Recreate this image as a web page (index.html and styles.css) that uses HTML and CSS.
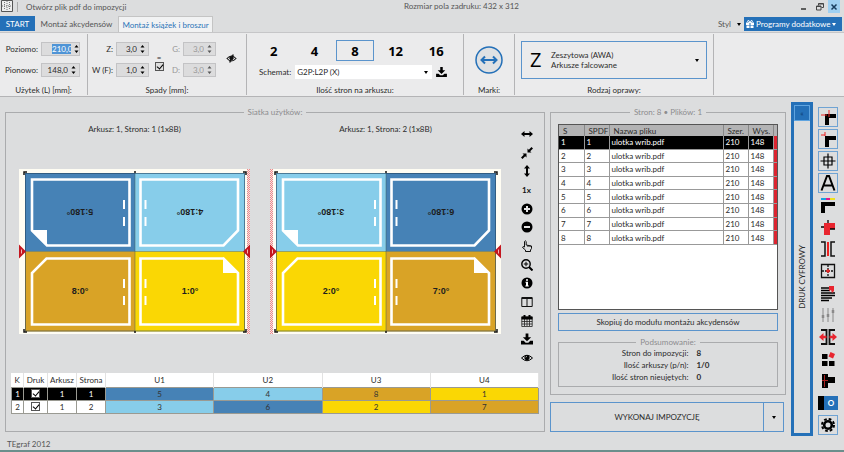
FILE: index.html
```html
<!DOCTYPE html>
<html lang="pl">
<head>
<meta charset="utf-8">
<title>Montaż książek i broszur</title>
<link rel="stylesheet" href="styles.css">
</head>
<body>
<svg class="defs" aria-hidden="true">
  <defs>
    <pattern id="hatch" width="2" height="2" patternUnits="userSpaceOnUse"><rect width="2" height="2" fill="#f4e4e4"/><rect width="1" height="1" fill="#ee8a8a"/><rect x="1" y="1" width="1" height="1" fill="#ee8a8a"/></pattern>
    <g id="frames">
      <g fill="none" stroke="#fff" stroke-width="2.6">
        <path d="M28 76.5H110.500V10.500H13V61.500Z"/>
        <path d="M121.500 10.500H219V61.500L204.500 76.500H121.500Z"/>
        <path d="M27.500 89.500H110.500V155.500H13V104Z"/>
        <path d="M121.500 89.500H204.500L219 104V155.500H121.500Z"/>
        <path stroke-width="2" d="M105 31v9M105 48v9M126.500 31v9M126.500 48v9M105 110v9M105 127v9M126.500 110v9M126.500 127v9"/>
      </g>
      <path d="M12 61H28V77ZM204 88V104H220Z" fill="#fff"/>
      <path d="M6 82.500H226M116 4V162.500" stroke="#3a5a50" stroke-opacity=".45" fill="none"/>
      <rect x="6.500" y="4.500" width="219" height="157.500" fill="none" stroke="#23455f" stroke-opacity=".6"/>
      <path d="M5 6V3h3M224 3h3v3M5 160v3h3M224 163h3v-3M116 2v2M116 162v2" fill="none" stroke="#151515" stroke-width="1.500"/>
      <path d="M0 75.500L7 82.500L0 89.500ZM231 75.500L224 82.500L231 89.500Z" fill="#c4161f"/>
      <path d="M2.500 80.500v4M228.500 80.500v4" stroke="#f3b5b5"/>
    </g>
    <g id="save"><path d="M5 0h3v4h3L6.500 8.500 2 4h3zM0 8h3l2 2h3l2-2h3v4H0z"/></g>
    <g id="spin"><path d="M0 3l2.500-3L5 3zM0 7l2.500 3L5 7z"/></g>
    <g id="down"><path d="M0 0h4L2 3z"/></g>
  </defs>
</svg>

<header class="titlebar">
  <svg class="app-icon" viewBox="0 0 12 12" width="12" height="12"><path d="M.5.5h11v11H.5z" fill="#eee" stroke="#555"/><path d="M6 1v10M1 6h10M3.500 2v8M8.500 2v8" stroke="#777" stroke-dasharray="1 1"/></svg>
  <span class="title">Otwórz plik pdf do impozycji</span>
  <span class="field-size">Rozmiar pola zadruku: 432 x 312</span>
  <div class="window-buttons">
    <button aria-label="Minimalizuj"><svg viewBox="0 0 8 8" width="8" height="8"><path d="M1 6h5" stroke="#333" stroke-width="1.500"/></svg></button>
    <button aria-label="Przywróć"><svg viewBox="0 0 8 8" width="8" height="8" fill="none" stroke="#444"><path d="M.5 3h4.500v4H.5zM.5 3.500H5M2.500 2.500v-2h5v4H5.500M2.500 1h5"/></svg></button>
    <button class="close" aria-label="Zamknij"><svg viewBox="0 0 8 8" width="8" height="8"><path d="M1.500 1.500l5 5M6.500 1.500l-5 5" stroke="#173c5e" stroke-width="1.500"/></svg></button>
  </div>
</header>

<nav class="tabs">
  <button class="tab start">START</button>
  <button class="tab jobs">Montaż akcydensów</button>
  <button class="tab active">Montaż książek i broszur</button>
  <button class="style-menu">Styl <svg viewBox="0 0 4 3" width="4" height="3"><use href="#down"/></svg></button>
  <button class="extras"><svg viewBox="0 0 8 8" width="8" height="8" fill="#fff"><path d="M0 2.500h3.500V5H0zM4.500 2.500H8V5H4.500zM.5 5.500h3V8h-3zM4.500 5.500h3V8h-3z"/><path d="M4 2.500C1 2.500 1 .500 2.500.500 3.500.500 4 2.500 4 2.500S4.500.500 5.500.500C7 .500 7 2.500 4 2.500z" fill="none" stroke="#fff"/></svg><span>Programy dodatkowe</span><svg viewBox="0 0 4 3" width="4" height="3" fill="#fff"><use href="#down"/></svg></button>
</nav>

<section class="ribbon">
  <div class="group size">
    <div class="group-body fields">
      <label for="w">Poziomo:</label><span class="spin"><input id="w" class="selected" value="210,0"><svg viewBox="0 0 5 10" width="5" height="8"><use href="#spin"/></svg></span>
      <label for="h">Pionowo:</label><span class="spin"><input id="h" value="148,0"><svg viewBox="0 0 5 10" width="5" height="8"><use href="#spin"/></svg></span>
    </div>
    <div class="caption">Użytek (L) [mm]:</div>
  </div>
  <div class="group bleeds">
    <div class="group-body bleed-row">
      <div class="fields">
        <label for="z">Z:</label><span class="spin"><input id="z" value="3,0"><svg viewBox="0 0 5 10" width="5" height="8"><use href="#spin"/></svg></span>
        <label for="wf">W (F):</label><span class="spin"><input id="wf" value="1,0"><svg viewBox="0 0 5 10" width="5" height="8"><use href="#spin"/></svg></span>
      </div>
      <label class="equal">=<input type="checkbox" class="check grey" checked></label>
      <div class="fields off">
        <label for="g">G:</label><span class="spin"><input id="g" value="3,0" disabled><svg viewBox="0 0 5 10" width="5" height="8"><use href="#spin"/></svg></span>
        <label for="d">D:</label><span class="spin"><input id="d" value="3,0" disabled><svg viewBox="0 0 5 10" width="5" height="8"><use href="#spin"/></svg></span>
      </div>
      <button class="plain eye" aria-label="Ukryj spady"><svg viewBox="0 0 12 10" width="11" height="9" fill="none" stroke="#111"><path d="M1 5Q6-.500 11 5Q6 10.500 1 5z" stroke-width="1.200"/><circle cx="6" cy="4.500" r="2" fill="#111"/><path d="M8 .500L4 9.500" stroke-width="1.500"/></svg></button>
    </div>
    <div class="caption">Spady [mm]:</div>
  </div>
  <div class="group pages">
    <div class="group-body">
      <div class="counts"><button>2</button><button>4</button><button class="chosen">8</button><button>12</button><button>16</button></div>
      <div class="scheme"><label for="scheme">Schemat:</label><span class="select"><select id="scheme"><option>G2P:L2P (X)</option></select><svg viewBox="0 0 4 3" width="4" height="3"><use href="#down"/></svg></span><button class="plain" aria-label="Zapisz schemat"><svg viewBox="0 0 13 12" width="11" height="10"><use href="#save"/></svg></button></div>
    </div>
    <div class="caption">Ilość stron na arkuszu:</div>
  </div>
  <div class="group marks">
    <div class="group-body"><button class="plain" aria-label="Marki"><svg viewBox="0 0 28 28" width="28" height="28" fill="none" stroke="#2470b8"><circle cx="14" cy="14" r="13" stroke-width="1.500" fill="#dfe1e3"/><path d="M7 14h14M10 10.500L6.500 14l3.500 3.500M18 10.500l3.500 3.500-3.500 3.500" stroke-width="2"/></svg></button></div>
    <div class="caption">Marki:</div>
  </div>
  <div class="group binding">
    <div class="group-body"><button class="binding-type"><span class="letter">Z</span><span class="lines">Zeszytowa (AWA)<br>Arkusze falcowane</span><svg viewBox="0 0 4 3" width="4" height="3"><use href="#down"/></svg></button></div>
    <div class="caption">Rodzaj oprawy:</div>
  </div>
</section>

<main class="workspace">
  <fieldset class="panel layout">
    <legend>Siatka użytków:</legend>
    <div class="preview">
      <div class="sheet-pair">
        <figure class="sheet">
          <figcaption>Arkusz: 1, Strona: 1 (1x8B)</figcaption>
          <svg viewBox="0 0 231 165">
            <rect x="228" width="3" height="165" fill="url(#hatch)"/><rect width="228" height="165" fill="#fffdf3"/>
            <path d="M6 4h110v78.500H6z" fill="#4682b6"/><path d="M116 4h110v78.500H116z" fill="#87cdea"/>
            <path d="M6 82.500h110V162.500H6z" fill="#d9a326"/><path d="M116 82.500h110V162.500H116z" fill="#fad704"/>
            <use href="#frames"/>
            <g class="page-no"><text transform="translate(61 40) rotate(180)">5:180°</text><text transform="translate(171 40) rotate(180)">4:180°</text><text x="61" y="125">8:0°</text><text x="171" y="125">1:0°</text></g>
          </svg>
        </figure>
        <figure class="sheet">
          <figcaption>Arkusz: 1, Strona: 2 (1x8B)</figcaption>
          <svg viewBox="0 0 231 165">
            <rect width="3" height="165" fill="url(#hatch)"/><rect x="3" width="228" height="165" fill="#fffdf3"/>
            <path d="M6 4h110v78.500H6z" fill="#87cdea"/><path d="M116 4h110v78.500H116z" fill="#4682b6"/>
            <path d="M6 82.500h110V162.500H6z" fill="#fad704"/><path d="M116 82.500h110V162.500H116z" fill="#d9a326"/>
            <use href="#frames"/>
            <g class="page-no"><text transform="translate(61 40) rotate(180)">3:180°</text><text transform="translate(171 40) rotate(180)">6:180°</text><text x="61" y="125">2:0°</text><text x="171" y="125">7:0°</text></g>
          </svg>
        </figure>
      </div>
      <div class="view-tools">
        <button aria-label="Szerokość"><svg viewBox="0 0 12 12"><path d="M0 6l3.500-3v2h5V3L12 6 8.500 9V7h-5v2z"/></svg></button>
        <button aria-label="Dopasuj"><svg viewBox="0 0 12 12"><path d="M6.500 5.500V1.500l1.300 1.300L10.500 0 12 1.500 9.200 4.200l1.300 1.300zM5.500 6.500v4L4.200 9.200 1.500 12 0 10.500 2.800 7.800 1.500 6.500z"/></svg></button>
        <button aria-label="Wysokość"><svg viewBox="0 0 12 12"><path d="M6 0l3 3.500H7v5h2L6 12 3 8.500h2v-5H3z"/></svg></button>
        <button class="one">1x</button>
        <button aria-label="Powiększ"><svg viewBox="0 0 12 12"><circle cx="6" cy="6" r="5.500"/><path d="M6 3v6M3 6h6" stroke="#e4e4e5" stroke-width="2"/></svg></button>
        <button aria-label="Pomniejsz"><svg viewBox="0 0 12 12"><circle cx="6" cy="6" r="5.500"/><path d="M3 6h6" stroke="#e4e4e5" stroke-width="2"/></svg></button>
        <button aria-label="Przesuń"><svg viewBox="0 0 12 12"><path d="M3.500 7V1.500Q4.300 0 5.200 1.500V5L10.500 6V8.500L9.500 10V11.500H4.500V10L1.500 7.500Q1.500 6 3.500 7zM7 5v2M9 5.500v1.500" fill="none" stroke="#111"/></svg></button>
        <button aria-label="Lupa"><svg viewBox="0 0 12 12"><g fill="none" stroke="#000"><circle cx="5" cy="5" r="4.200" stroke-width="1.400"/><path d="M8 8l3.500 3.500" stroke-width="2"/><path d="M5 2.800v4.400M2.800 5h4.400"/></g></svg></button>
        <button aria-label="Informacje"><svg viewBox="0 0 12 12"><circle cx="6" cy="6" r="5.500"/><path d="M5 2.200h2v1.600H5zM4.500 4.800H7V8.500h.8v1H4.300v-1H5V5.800h-.5z" fill="#fff"/></svg></button>
        <button aria-label="Kolumny"><svg viewBox="0 0 12 12"><path d="M.8 1.500h10.400v9H.8zM6 1.500v9M.8 2.500h10.400" fill="none" stroke="#111"/></svg></button>
        <button aria-label="Kalendarz"><svg viewBox="0 0 12 12"><path d="M.8 2h10.400v9.500H.8zM.8 6.500h10.400M.8 9h10.400M3.500 4v7M6 4v7M8.500 4v7" fill="none" stroke="#222" stroke-width=".8"/><path d="M.5 1.500h11v3H.5zM2.500 0h2v3h-2zM7.500 0h2v3h-2z"/></svg></button>
        <button aria-label="Zapisz"><svg viewBox="0 0 13 12"><use href="#save"/></svg></button>
        <button aria-label="Podgląd"><svg viewBox="0 0 12 12"><path d="M.5 6Q6 .5 11.500 6Q6 11.500.5 6z" fill="none" stroke="#000"/><circle cx="6" cy="5.500" r="2.600"/><path d="M4.800 5.500Q4.800 4.300 6 4.300" fill="none" stroke="#ddd" stroke-width=".7"/></svg></button>
      </div>
    </div>
    <table class="sheets">
      <thead><tr><th class="k">K</th><th class="print">Druk</th><th class="num">Arkusz</th><th class="num">Strona</th><th>U1</th><th>U2</th><th>U3</th><th>U4</th></tr></thead>
      <tbody>
        <tr class="current"><td>1</td><td><input type="checkbox" class="check" aria-label="Druk 1" checked></td><td>1</td><td>1</td><td class="blue">5</td><td class="sky">4</td><td class="ochre">8</td><td class="yellow">1</td></tr>
        <tr><td>2</td><td><input type="checkbox" class="check" aria-label="Druk 2" checked></td><td>1</td><td>2</td><td class="sky">3</td><td class="blue">6</td><td class="yellow">2</td><td class="ochre">7</td></tr>
      </tbody>
    </table>
  </fieldset>

  <div class="side">
    <fieldset class="panel files">
      <legend>Stron: 8 • Plików: 1</legend>
      <div class="file-list">
        <table>
          <thead><tr><th class="s">S</th><th class="s">SPDF</th><th>Nazwa pliku</th><th class="s">Szer.</th><th class="s">Wys.</th><th class="flag"></th></tr></thead>
          <tbody>
            <tr class="current"><td>1</td><td>1</td><td>ulotka wrib.pdf</td><td>210</td><td>148</td><td class="flag"></td></tr>
            <tr><td>2</td><td>2</td><td>ulotka wrib.pdf</td><td>210</td><td>148</td><td class="flag"></td></tr>
            <tr><td>3</td><td>3</td><td>ulotka wrib.pdf</td><td>210</td><td>148</td><td class="flag"></td></tr>
            <tr><td>4</td><td>4</td><td>ulotka wrib.pdf</td><td>210</td><td>148</td><td class="flag"></td></tr>
            <tr><td>5</td><td>5</td><td>ulotka wrib.pdf</td><td>210</td><td>148</td><td class="flag"></td></tr>
            <tr><td>6</td><td>6</td><td>ulotka wrib.pdf</td><td>210</td><td>148</td><td class="flag"></td></tr>
            <tr><td>7</td><td>7</td><td>ulotka wrib.pdf</td><td>210</td><td>148</td><td class="flag"></td></tr>
            <tr><td>8</td><td>8</td><td>ulotka wrib.pdf</td><td>210</td><td>148</td><td class="flag"></td></tr>
          </tbody>
        </table>
      </div>
      <button class="outlined copy">Skopiuj do modułu montażu akcydensów</button>
      <fieldset class="panel summary">
        <legend>Podsumowanie:</legend>
        <dl><dt>Stron do impozycji:</dt><dd>8</dd><dt>Ilość arkuszy (p/n):</dt><dd>1/0</dd><dt>Ilość stron nieujętych:</dt><dd>0</dd></dl>
      </fieldset>
    </fieldset>
    <div class="run"><button class="outlined">WYKONAJ IMPOZYCJĘ</button><button class="outlined more" aria-label="Więcej"><svg viewBox="0 0 4 3" width="4" height="3"><use href="#down"/></svg></button></div>
  </div>

  <aside class="drawer">
    <button aria-label="Rozwiń">«</button>
    <span>DRUK CYFROWY</span>
  </aside>

  <div class="marks-bar">
    <button class="framed" aria-label="Pasery cięcia"><svg viewBox="0 0 18 18"><path d="M6 6h11v4h-7v7H6z"/><path d="M2 7h6M10 2v7" stroke="#e22"/></svg></button>
    <button class="framed" aria-label="Narożniki"><svg viewBox="0 0 18 18"><path d="M6 6h11v4h-7v7H6z"/><path d="M2 5h4M6 2v4" stroke="#e22"/></svg></button>
    <button class="framed" aria-label="Paser"><svg viewBox="0 0 18 18" fill="none" stroke="#000" stroke-width="1.200"><path d="M5 5h8v8H5zM9 1.500v15M1.500 9h15"/></svg></button>
    <button class="framed" aria-label="Opis"><svg viewBox="0 0 18 18" fill="none" stroke="#000" stroke-width="2"><path d="M2.500 16.500L8 2h2l5.500 14.500M4.500 11.500h9"/></svg></button>
    <button aria-label="Pasek barw"><svg viewBox="0 0 18 18"><path d="M2 6h14v4H6v7H2z"/><path d="M2 3h5" stroke="#1a9fe0" stroke-width="2"/><path d="M7 3h4" stroke="#e0188c" stroke-width="2"/><path d="M11 3h5" stroke="#f0e020" stroke-width="2"/></svg></button>
    <button aria-label="Spad"><svg viewBox="0 0 18 18"><path d="M5 5h11v6h-5v6H5z" fill="#e8252f"/><path d="M9 2v3M2 9h3M11 11h5" stroke="#000" stroke-width="1.300"/></svg></button>
    <button aria-label="Grzbiet"><svg viewBox="0 0 18 18" fill="none" stroke="#111" stroke-width="1.500"><path d="M2 2h4v14H2M16 2h-4v14h4"/><path d="M9 2v14" stroke="#e22" stroke-width="2"/></svg></button>
    <button aria-label="Siatka"><svg viewBox="0 0 18 18" fill="none" stroke="#111" stroke-width="1.300"><path d="M2.500 2.500h13v13h-13z"/><path d="M9 3v12M3 9h12" stroke-dasharray="2 1"/><path d="M9 7v4M7 9h4" stroke="#e22"/></svg></button>
    <button aria-label="Tekst"><svg viewBox="0 0 18 18"><path d="M2 4h8M2 6.500h9M2 9h14M2 11.500h14M2 14h11M2 16.500h8" stroke="#000" stroke-width="1.500"/><path d="M10 2h5v5l-2 2-1-3-2 1z" fill="#e8252f"/></svg></button>
    <button aria-label="Suwaki"><svg viewBox="0 0 18 18" stroke="#8a8a8a"><path d="M4 2v14M9 2v14M14 2v14"/><path d="M4 9v3M9 8v3M14 4v3" stroke-width="2.500"/></svg></button>
    <button aria-label="Rozsunięcie"><svg viewBox="0 0 18 18"><path d="M2 2h5.500v14H2M16 2h-5.500v14H16" fill="none" stroke="#111" stroke-width="1.800"/><path d="M0 9l4.500-4v2.800h3v2.400h-3V13zM18 9l-4.500-4v2.800h-3v2.400h3V13z" fill="#e8252f"/></svg></button>
    <button aria-label="Elementy"><svg viewBox="0 0 18 18"><path d="M3 4h5.500v5H3zM3 11h5.500v5H3zM10 11h5.500v5H10z"/><path d="M11.500 2l4.500 2-2 4.500-4.500-2z" fill="#e8252f"/></svg></button>
    <button aria-label="Znacznik boczny"><svg viewBox="0 0 18 18"><path d="M3 2h6v3h7v6H9v5H3z"/><path d="M3 8.500h6M5.500 3v12" stroke="#a22"/></svg></button>
    <button class="toggle" aria-label="Przełącznik">O</button>
    <button class="framed" aria-label="Ustawienia"><svg viewBox="0 0 18 18" fill="none" stroke="#000"><circle cx="9" cy="9" r="3.800" stroke-width="2.600"/><circle cx="9" cy="9" r="6" stroke-width="2" stroke-dasharray="2.700 2.010"/></svg></button>
  </div>
</main>

<footer class="status">TEgraf 2012</footer>
<div class="taskbar"></div>
</body>
</html>
```
FILE: styles.css
```css
* { box-sizing: border-box; }
body {
  margin: 0;
  min-height: 100vh;
  display: flex;
  flex-direction: column;
  background: #dcddde;
  color: #2b2b2b;
  font: 8px/10px Lato, "Open Sans", sans-serif;
}
.defs { position: absolute; width: 0; height: 0; }
button, input, select { font: inherit; color: inherit; margin: 0; padding: 0; border: 0; border-radius: 0; background: none; }
button { display: flex; align-items: center; justify-content: center; white-space: nowrap; }
svg { display: block; flex: none; }

.titlebar { display: grid; grid-template-columns: 12px 1fr auto 1fr; align-items: start; height: 16px; padding: 0 4px 0 1px; color: #555; }
.titlebar .title { margin: 2px 0 0 4px; padding-left: 8px; border-left: 1px solid #aaa; }
.field-size { margin-top: 1px; padding-left: 70px; }
.window-buttons { display: flex; justify-content: flex-end; }
.window-buttons button { width: 16px; height: 13px; }
.window-buttons .close { background: #9fd0f2; width: 12px; }

.tabs { display: flex; height: 16px; }
.tab { padding: 0; }
.tab.start { width: 35px; height: 15px; background: #2470b8; color: #fff; }
.tab.jobs { width: 83px; color: #555; }
.tab.active { width: 95px; background: #f1f2f3; color: #2b74b8; border: 1px solid #c4c4c4; border-bottom: 0; }
.style-menu { margin-left: auto; gap: 6px; margin-right: 3px; color: #555; }
.extras { width: 98px; height: 14px; margin: 1px 2px 0 0; background: #2470b8; color: #fff; padding: 0 6px 0 2px; }
.extras span { flex: 1; text-align: left; padding-left: 2px; }

.ribbon { display: flex; height: 65px; background: #ebebec; border-top: 1px solid #c6c6c8; border-bottom: 1px solid #b4b4b6; }
.group { display: flex; flex-direction: column; border-right: 1px solid #b4b4b6; margin: 1px 0; }
.group-body { flex: 1; }
.caption { text-align: center; height: 10px; }
.group.size { width: 88px; }
.group.bleeds { width: 159px; }
.group.pages { width: 217px; }
.group.marks { width: 51px; }
.group.binding { width: 199px; }
.fields { display: grid; grid-template-columns: 1fr auto; column-gap: 3px; row-gap: 7px; align-content: start; align-items: center; justify-items: end; padding-top: 8px; }
.size .fields { padding-right: 7px; }
.size .spin { width: 39px; }
.spin { display: flex; align-items: center; width: 33px; height: 14px; padding-right: 3px; background: #dcdcdd; border: 1px solid #c3c3c5; }
.spin input { min-width: 0; flex: 1; width: 100%; text-align: right; height: 10px; margin-right: 3px; }
.spin .selected { flex: none; width: 19px; margin-left: 10px; background: #4f94d6; color: #fff; }
.off { color: #999; }
.off svg { opacity: .6; }
.bleed-row { display: flex; }
.bleed-row .fields { width: 61px; }
.equal { width: 20px; padding-top: 18px; text-align: center; }
.bleed-row .off { width: 47px; }
.check { appearance: none; display: block; width: 9px; height: 9px; margin: 0 auto; border: 1px solid #555; background: #fff; position: relative; }
.check::after { content: ""; position: absolute; left: 2px; top: 0; width: 3px; height: 5px; border: solid #000; border-width: 0 1px 1px 0; transform: rotate(40deg); }
.check.grey { background: #ddd; }
.eye { margin: 20px 0 0 10px; align-self: flex-start; }
.counts { display: grid; grid-template-columns: repeat(5, 1fr); column-gap: 3px; padding: 6px 8px 0; }
.counts button { height: 21px; font: 700 13px/18px "Open Sans", sans-serif; color: #000; }
.counts .chosen { border: 1px solid #5b94cc; }
.scheme { display: flex; align-items: center; gap: 4px; padding: 4px 16px 0 12px; }
.select { flex: 1; display: flex; align-items: center; height: 14px; background: #fff; padding-right: 4px; }
.select select { appearance: none; flex: 1; padding-left: 2px; }
.marks .group-body, .binding .group-body { display: flex; align-items: flex-start; justify-content: center; padding-top: 12px; }
.binding .group-body { padding-top: 7px; }
.binding-type { width: 186px; height: 38px; border: 1px solid #5b94cc; padding: 0 7px 0 8px; text-align: left; }
.letter { font: 20px/24px "Open Sans", sans-serif; width: 21px; color: #000; }
.lines { flex: 1; }

.workspace { flex: 1; display: grid; grid-template-columns: minmax(0, 540fr) minmax(0, 236fr) 22px 22px; column-gap: 5px; padding: 5px 4px 0 5px; }
.panel { min-width: 0; margin: 0; padding: 0; border: 1px solid #aaabad; }
.panel > legend { margin: 0 auto; padding: 0 4px; color: #8c8c8e; }
.layout { margin: 5px 0 6px; padding: 0 5px; }
.preview { display: flex; min-height: 247px; padding-left: 8px; }
.sheet-pair { flex: 1; display: grid; grid-template-columns: 1fr 1fr; column-gap: 20px; margin-right: 13px; }
.sheet { margin: 0; }
.sheet svg { width: 100%; }
figcaption { text-align: center; padding-top: 7px; margin-bottom: 35px; }
.page-no { font: 700 9px/10px "Liberation Sans", Arial, sans-serif; fill: #1d1d1d; text-anchor: middle; }
.view-tools { width: 25px; display: flex; flex-direction: column; justify-content: space-between; align-items: center; padding-top: 11px; }
.view-tools button { height: 12px; color: #111; }
.view-tools svg { width: 12px; height: 12px; }
.view-tools .one { font-weight: 700; }

table { border-collapse: collapse; table-layout: fixed; width: 100%; }
th, td { padding: 0; font-weight: 400; line-height: 10px; }
.sheets { margin-top: 9px; text-align: center; background: #fff; }
.sheets th { height: 14px; border-right: 1px solid #e2e2e2; }
.sheets td { height: 13px; border: 1px solid #9a9a92; }
.sheets .k { width: 12px; }
.sheets .print { width: 24px; }
.sheets .num { width: 29px; }
.current { background: #000; color: #fff; }
.blue, .sky, .ochre, .yellow { color: #333; }
.blue { background: #4682b6; }
.sky { background: #87cdea; }
.ochre { background: #d9a326; }
.yellow { background: #fad704; }

.side { display: flex; flex-direction: column; margin-top: 5px; }
.files { flex: 1; padding: 0 7px 7px; display: flex; flex-direction: column; }
.file-list { margin-top: 7px; height: 186px; background: #fff; border: 1px solid #555; }
.file-list table { height: 120px; text-align: left; }
.file-list th { background: #b3b3b4; height: 11px; border-right: 1px solid #888; padding-left: 4px; }
.file-list td { border-right: 1px solid #999; border-bottom: 1px solid #999; padding-left: 2px; }
.file-list .s { width: 25px; }
.file-list .flag { width: 4px; padding: 0; border-right: 0; }
.file-list td.flag { background: #dc2430; }
.outlined { border: 1px solid #5b94cc; }
.copy { width: 100%; height: 18px; margin: 3px 0 6px; }
.summary dl { margin: 0; display: grid; grid-template-columns: 135fr 84fr; column-gap: 8px; row-gap: 2px; padding: 1px 0 4px; }
dt { text-align: right; }
dd { margin: 0; font-weight: 700; }
.run { display: flex; height: 30px; margin: 7px 2px 6px 0; }
.run button { flex: 1; }
.run .more { flex: none; width: 20px; border-left: 0; }

.drawer { display: flex; flex-direction: column; align-items: center; border: 3px solid #2470b8; margin-bottom: 2px; }
.drawer button { width: 100%; height: 16px; background: #2470b8; color: #0d3c70; border: 1px solid #5fa4e0; }
.drawer span { writing-mode: vertical-rl; transform: rotate(180deg); margin: auto; }
.marks-bar { display: flex; flex-direction: column; gap: 2px; padding-top: 5px; }
.marks-bar button { width: 20px; height: 20px; border: 1px solid transparent; }
.marks-bar .framed { border-color: #6fa3d3; }
.marks-bar svg { width: 18px; height: 18px; }
.marks-bar .toggle { height: 14px; margin: 3px 0; background: #2470b8; color: #fff; border: 0; border-left: 6px solid #000; font-weight: 700; }

.status { height: 12px; padding: 0 7px; line-height: 12px; color: #555; }
.taskbar { height: 2px; background: #6b8f8c; }
```
